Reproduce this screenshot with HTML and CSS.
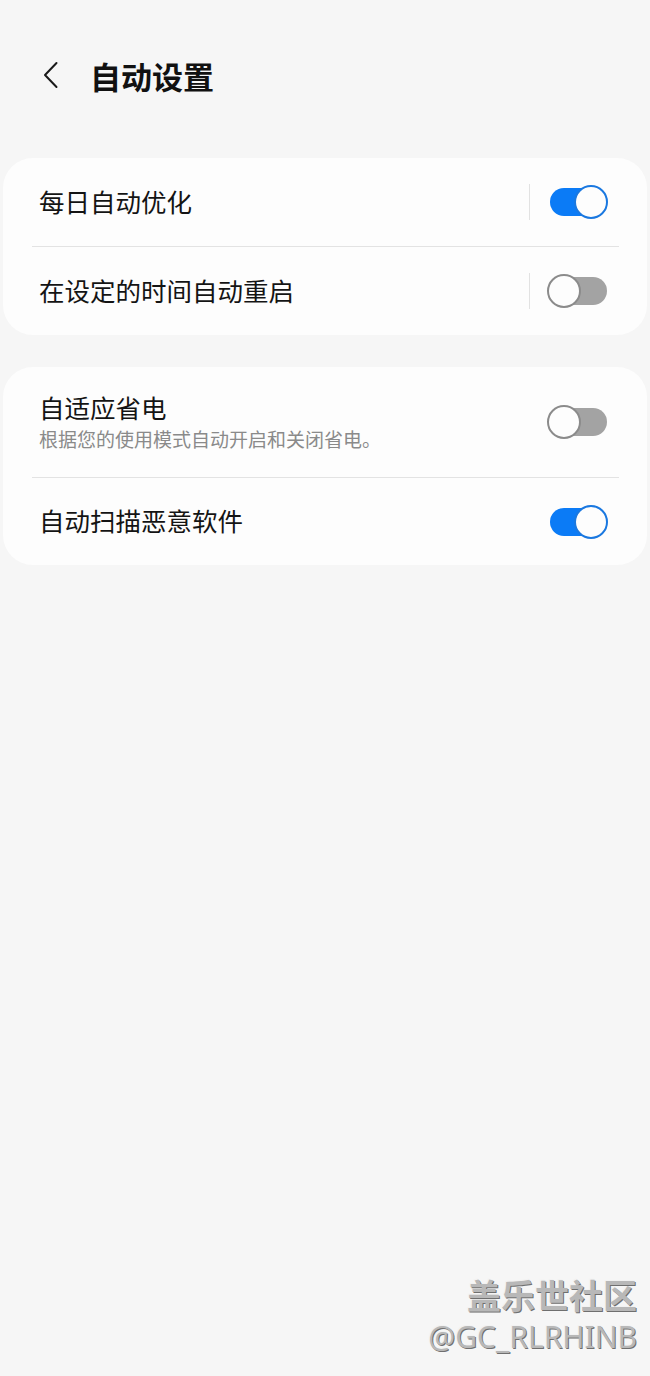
FILE: index.html
```html
<!DOCTYPE html>
<html lang="zh-CN">
<head>
  <meta charset="utf-8">
  <meta name="viewport" content="width=device-width, initial-scale=1">
  <title>自动设置</title>
  <link rel="stylesheet" href="styles.css">
</head>
<body>
  <div class="page">
    <header class="header">
      <button class="header__back" aria-label="返回">
        <svg width="20" height="28" viewBox="0 0 20 28" fill="none">
          <polyline points="15.5,2 4,14 15.5,26" stroke="#1a1a1a" stroke-width="2" stroke-linecap="round" stroke-linejoin="round"/>
        </svg>
      </button>
      <h1 class="header__title">自动设置</h1>
    </header>

    <section class="card">
      <div class="row">
        <div class="row__text">
          <span class="row__title">每日自动优化</span>
        </div>
        <span class="row__sep"></span>
        <span class="switch switch--on" role="switch" aria-checked="true"></span>
      </div>
      <hr class="divider">
      <div class="row">
        <div class="row__text">
          <span class="row__title">在设定的时间自动重启</span>
        </div>
        <span class="row__sep"></span>
        <span class="switch" role="switch" aria-checked="false"></span>
      </div>
    </section>

    <section class="card">
      <div class="row row--tall">
        <div class="row__text">
          <span class="row__title">自适应省电</span>
          <span class="row__desc">根据您的使用模式自动开启和关闭省电。</span>
        </div>
        <span class="switch" role="switch" aria-checked="false"></span>
      </div>
      <hr class="divider">
      <div class="row row--last">
        <div class="row__text">
          <span class="row__title">自动扫描恶意软件</span>
        </div>
        <span class="switch switch--on" role="switch" aria-checked="true"></span>
      </div>
    </section>

    <div class="watermark">
      <span class="watermark__brand">盖乐世社区</span>
      <span class="watermark__user">@GC_RLRHINB</span>
    </div>
  </div>
</body>
</html>
```

FILE: styles.css
```css
*, *::before, *::after {
  margin: 0;
  padding: 0;
  box-sizing: border-box;
}

html {
  color: #141414;
  font-family: "Noto Sans CJK SC", "Noto Sans", sans-serif;
}

body {
  background-color: #f6f6f6;
}

.page {
  position: relative;
  min-height: 1376px;
  padding: 49px 3px 0;
}

.header {
  display: flex;
  align-items: center;
  height: 56px;
  margin-bottom: 53px;
  padding-left: 38px;
}

.header__back {
  display: block;
  width: 20px;
  height: 28px;
  margin-top: -4px;
  border: none;
  background: none;
}

.header__back svg {
  display: block;
}

.header__title {
  margin-top: -4px;
  margin-left: 29px;
  font-size: 31px;
  font-weight: 700;
  line-height: 1;
  color: #111111;
}

.card {
  margin-bottom: 32px;
  border-radius: 30px;
  background-color: #fdfdfd;
}

.row {
  display: flex;
  align-items: center;
  height: 88px;
  padding: 0 39px 0 36px;
}

.row--tall {
  height: 110px;
}

.row--tall .row__text {
  padding-bottom: 2px;
}

.row--last {
  height: 87px;
}

.row__text {
  display: flex;
  flex: 1;
  flex-direction: column;
  padding-bottom: 4px;
}

.row__title {
  font-size: 25.5px;
  line-height: 33px;
  color: #141414;
}

.row__desc {
  margin-top: 3px;
  font-size: 19px;
  line-height: 26px;
  color: #8a8a8a;
}

.row__sep {
  width: 1px;
  height: 36px;
  margin-right: 17px;
  background-color: #e2e2e2;
}

.divider {
  height: 1px;
  margin: 0 28px 0 29px;
  border: none;
  background-color: #e3e3e3;
}

.switch {
  position: relative;
  flex: none;
  width: 61px;
  height: 34px;
}

.switch::before {
  content: "";
  position: absolute;
  top: 3px;
  bottom: 3px;
  left: 3px;
  right: 1px;
  border-radius: 14px;
  background-color: #a3a3a3;
}

.switch::after {
  content: "";
  position: absolute;
  top: 0;
  left: 0;
  width: 34px;
  height: 34px;
  border: 2px solid #8b8b8b;
  border-radius: 50%;
  background-color: #fdfdfd;
}

.switch--on::before {
  background-color: #0b7bf6;
}

.switch--on::after {
  left: auto;
  right: 0;
  border-color: #1a78e0;
}

.watermark {
  position: absolute;
  right: 13px;
  bottom: 18px;
  display: flex;
  flex-direction: column;
  align-items: flex-end;
  color: #b8b8b8;
  text-shadow: 1px 1px 0 #6f6f6f, -1px -1px 0 #f2f2f2;
}

.watermark__brand {
  font-size: 34px;
  font-weight: 700;
  line-height: 42px;
}

.watermark__user {
  font-family: "Noto Sans", sans-serif;
  font-size: 30px;
  line-height: 42px;
}
```
